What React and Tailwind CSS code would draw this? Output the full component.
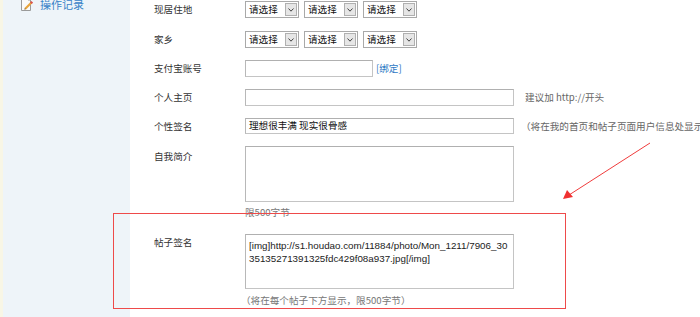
import React from "react";

const cjk = { fontFamily: '"Noto Sans CJK SC","Liberation Sans",sans-serif' };

function Select() {
  return (
    <div className="flex h-[17px] w-[54px] items-center border border-[#a9a9a9] bg-white pl-[3px] pr-[1px]">
      <span className="flex-1 text-[9.6px] leading-none text-[#111]">请选择</span>
      <span className="flex h-[13px] w-[12px] items-center justify-center border border-[#b0b0b0] bg-[#e6e6e6]">
        <svg width="6" height="4" viewBox="0 0 6 4">
          <path d="M0.5 0.5 L3 3.2 L5.5 0.5" fill="none" stroke="#444" strokeWidth="1" />
        </svg>
      </span>
    </div>
  );
}

function Label({ children, className = "" }) {
  return <div className={"w-[91px] shrink-0 text-[9.6px] text-[#333] " + className}>{children}</div>;
}

const inputCls = "border border-[#c4c4c4] border-t-[#b0b0b0] border-l-[#b8b8b8] bg-white";

export default function App() {
  return (
    <div className="relative h-[317px] w-[700px] overflow-hidden bg-white" style={cjk}>
      <div className="flex h-full">
        {/* sidebar */}
        <div className="flex h-full w-[130px] shrink-0">
          <div className="w-[3px] bg-[#f8f6e6]" />
          <div className="flex-1 bg-[#eef4f9]">
            <div className="-mt-[3px] ml-[17px] flex h-[14px] items-center gap-[7px]">
              <svg width="13" height="14" viewBox="0 0 13 14">
                <path d="M1.5 0.5 H8 L10.5 3 V13.5 H1.5 Z" fill="#fafafa" stroke="#9a9a9a" strokeWidth="1" />
                <path d="M8 0.5 V3 H10.5" fill="#e0e0e0" stroke="#9a9a9a" strokeWidth="1" />
                <path d="M5 12 L11.5 5.5" stroke="#e9a33a" strokeWidth="2.2" />
                <path d="M10.6 4.6 L12.4 6.4" stroke="#d9534f" strokeWidth="2" />
                <path d="M4.2 12.8 L5 11.2 L5.8 12" fill="#555" />
              </svg>
              <span className="text-[11px] leading-none text-[#3a83c8]">操作记录</span>
            </div>
          </div>
        </div>

        {/* main */}
        <div className="flex-1 pl-[24px] pt-[1px]">
          <div className="flex h-[17px] items-center">
            <Label>现居住地</Label>
            <div className="flex gap-[5px]">
              <Select />
              <Select />
              <Select />
            </div>
          </div>

          <div className="mt-[13px] flex h-[17px] items-center">
            <Label>家乡</Label>
            <div className="flex gap-[5px]">
              <Select />
              <Select />
              <Select />
            </div>
          </div>

          <div className="mt-[12px] flex h-[17px] items-center">
            <Label>支付宝账号</Label>
            <div className={"h-[17px] w-[128px] " + inputCls} />
            <span className="ml-[3px] text-[9.6px] text-[#2f78c4]">[绑定]</span>
          </div>

          <div className="mt-[12px] flex h-[17px] items-center">
            <Label>个人主页</Label>
            <div className={"h-[17px] w-[269px] " + inputCls} />
            <span className="ml-[11px] whitespace-nowrap text-[9.6px] text-[#666]">建议加 http://开头</span>
          </div>

          <div className="mt-[12px] flex h-[16px] items-center">
            <Label>个性签名</Label>
            <div className={"flex h-[16px] w-[269px] items-center pl-[3px] " + inputCls}>
              <span className="text-[9.6px] leading-none text-[#111]">理想很丰满 现实很骨感</span>
            </div>
            <span className="ml-[7px] whitespace-nowrap text-[9.6px] text-[#666]">（将在我的首页和帖子页面用户信息处显示</span>
          </div>

          <div className="mt-[12px] flex items-start">
            <Label className="pt-[4px] leading-[13px]">自我简介</Label>
            <div className={"h-[56px] w-[269px] " + inputCls} />
          </div>
          <div className="mt-[4px] pl-[91px] text-[9.6px] leading-[13px] text-[#777]">限500字节</div>

          <div className="mt-[15px] flex items-start">
            <Label className="pt-[2px] leading-[13px]">帖子签名</Label>
            <div
              className={"h-[55px] w-[269px] px-[3px] pt-[4px] text-[9.8px] leading-[13px] text-[#222] " + inputCls}
              style={{ fontFamily: '"Liberation Sans",Arial,sans-serif' }}
            >
              [img]http://s1.houdao.com/11884/photo/Mon_1211/7906_30
              <br />
              35135271391325fdc429f08a937.jpg[/img]
            </div>
          </div>
          <div className="mt-[5px] pl-[87px] text-[9.6px] leading-[13px] text-[#777]">（将在每个帖子下方显示，限500字节）</div>
        </div>
      </div>

      {/* annotation overlay */}
      <div className="pointer-events-none absolute left-[113px] top-[213px] h-[96px] w-[453px] border-[1.5px] border-[#ee4a4a]" />
      <svg className="pointer-events-none absolute left-0 top-0" width="700" height="317">
        <line x1="650" y1="143" x2="569" y2="195" stroke="#f03c3c" strokeWidth="1" />
        <path d="M563 199 L567 190 L573 197 Z" fill="#f03030" />
      </svg>
    </div>
  );
}
